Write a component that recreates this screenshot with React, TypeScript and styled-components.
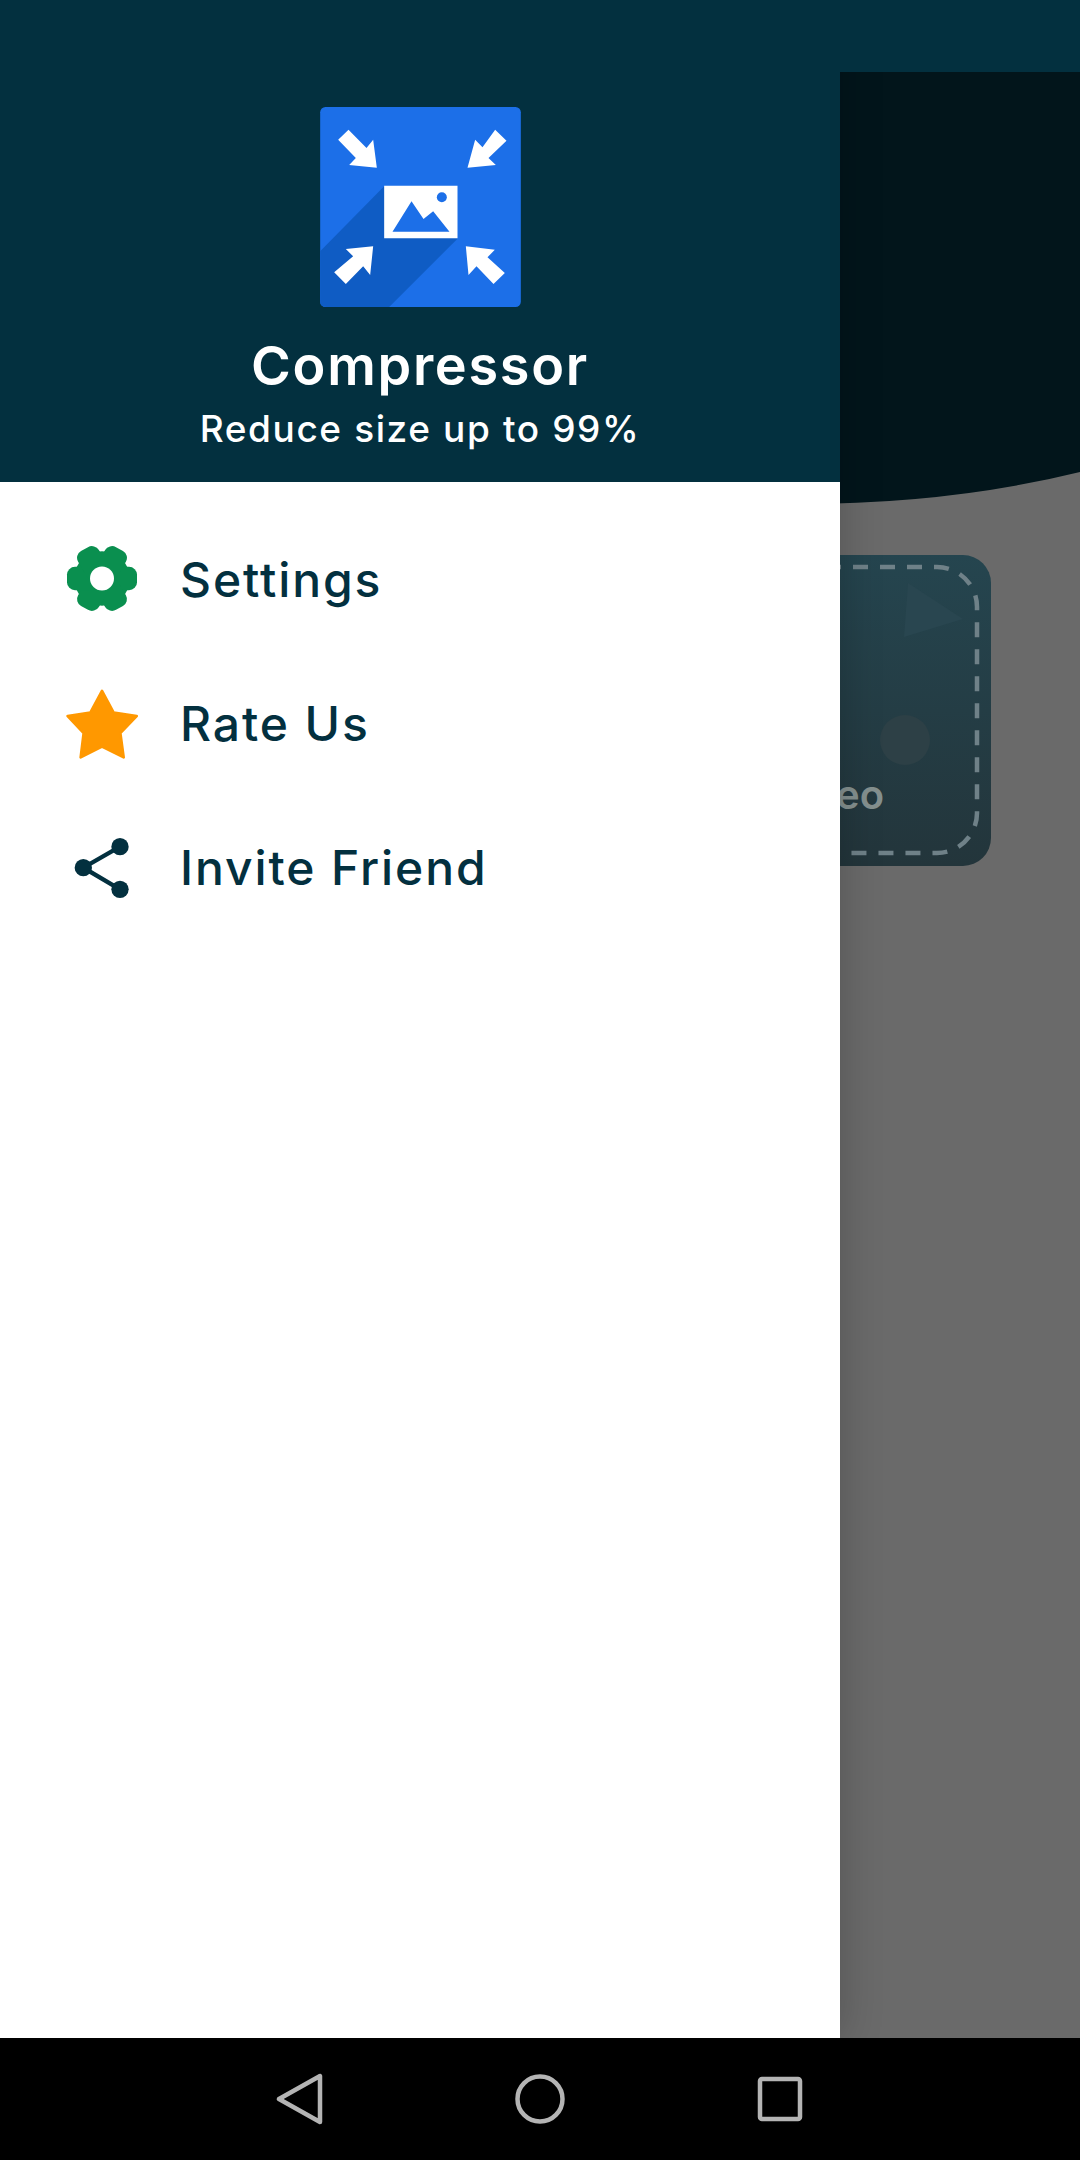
import styled, { createGlobalStyle } from 'styled-components';

const GlobalStyle = createGlobalStyle`
  html, body {
    margin: 0;
    padding: 0;
    background: #000;
  }
`;

const Screen = styled.div`
  width: 1080px;
  height: 2160px;
  display: flex;
  flex-direction: column;
  font-family: Inter, "Liberation Sans", sans-serif;
  overflow: hidden;
`;

const Stage = styled.div`
  position: relative;
  flex: 1;
  background: #6a6a6a;
  overflow: hidden;
`;

const StatusStrip = styled.div`
  position: relative;
  z-index: 1;
  height: 72px;
  background: #03303f;
`;

const Hero = styled.div`
  height: 398px;
  background: #02151b;
`;

const HeroCurve = styled.svg`
  display: block;
  width: 1080px;
  height: 34px;
`;

const Card = styled.div`
  position: relative;
  box-sizing: border-box;
  width: 391px;
  height: 311px;
  margin: 51px 0 0 600px;
  border-radius: 28px;
  background: linear-gradient(180deg, #25454f 0%, #23353b 100%);
  display: flex;
  flex-direction: column;
  align-items: flex-end;
  justify-content: flex-end;
  padding: 0 107px 48px 0;
`;

const CardArt = styled.svg`
  position: absolute;
  left: 0;
  top: 0;
`;

const CardLabel = styled.span`
  position: relative;
  font-size: 40px;
  line-height: 46px;
  font-weight: 600;
  color: #84908f;
`;

const Drawer = styled.aside`
  position: absolute;
  left: 0;
  top: 0;
  bottom: 0;
  width: 840px;
  background: #fff;
  box-shadow: 0 0 40px rgba(0, 0, 0, 0.22);
`;

const DrawerHeader = styled.header`
  box-sizing: border-box;
  height: 482px;
  padding-top: 107px;
  background: #03303f;
  color: #fff;
  display: flex;
  flex-direction: column;
  align-items: center;
`;

const Logo = styled.svg`
  display: block;
  width: 201px;
  height: 200px;
`;

const AppName = styled.h1`
  margin: 27px 0 0;
  font-size: 54px;
  line-height: 64px;
  font-weight: 600;
  letter-spacing: 1.7px;
`;

const Tagline = styled.p`
  margin: 8px 0 0;
  font-size: 37px;
  line-height: 46px;
  font-weight: 500;
  letter-spacing: 1.6px;
`;

const Menu = styled.nav`
  padding-top: 26px;
`;

const MenuRow = styled.div`
  height: 144px;
  display: flex;
  align-items: center;
  gap: 42px;
  padding-left: 66px;
`;

const MenuIcon = styled.svg`
  display: block;
  width: 72px;
  height: 72px;
  flex: none;
`;

const MenuLabel = styled.span`
  font-size: 48px;
  line-height: 56px;
  font-weight: 500;
  color: #03303f;
  letter-spacing: 1.9px;
`;

const NavBar = styled.div`
  height: 122px;
  flex: none;
  background: #000;
  display: flex;
  align-items: center;
  justify-content: center;
  gap: 190px;
`;

const NavIcon = styled.svg`
  display: block;
  width: 50px;
  height: 52px;
  fill: none;
  stroke: #b4b4b4;
  stroke-width: 4.5;
  stroke-linejoin: round;
`;

const Backdrop = () => (
  <>
    <StatusStrip />
    <Hero />
    <HeroCurve viewBox="0 0 1080 34">
      <path d="M0 0H1080V2Q950 34 800 34H0Z" fill="#02151b" />
    </HeroCurve>
    <Card>
      <CardArt width="391" height="311" viewBox="0 0 391 311">
        <rect x="-30" y="12" width="407" height="286" rx="40" fill="none" stroke="#6f8188" strokeWidth="4.5" strokeDasharray="15 12" />
        <path d="M308 28L363 64 304 82Z" fill="#294650" />
        <circle cx="305" cy="185" r="25" fill="#2d4046" />
      </CardArt>
      <CardLabel>Video</CardLabel>
    </Card>
  </>
);

const AppLogo = () => (
  <Logo viewBox="58 52 602 600">
    <rect x="58" y="52" width="602" height="600" rx="16" fill="#1c6fe8" />
    <path d="M250 290L58 485V634Q58 652 76 652H265L470 447Z" fill="#0f5cc4" />
    <path d="M250 288H470V446H250Z" fill="#fff" />
    <circle cx="423" cy="323" r="15" fill="#1c6fe8" />
    <path d="M275 426L332 335 368 388 397 365 446 426Z" fill="#1c6fe8" />
    <g fill="#fff">
      <path d="M228 234L145 226 165 205 112 150 143 120 197 175 217 150Z" />
      <path d="M500 234L523 150 545 173 583 120 617 153 563 205 585 226Z" />
      <path d="M217 470L135 478 157 500 100 548 135 583 187 530 208 556Z" />
      <path d="M495 470L582 480 560 503 612 550 578 583 527 530 503 556Z" />
    </g>
  </Logo>
);

const GearIcon = () => (
  <MenuIcon viewBox="-36 -34.5 72 72">
    <g fill="#0a8f4f" transform="scale(1 0.97)">
      <circle r="28" />
      {[0, 60, 120, 180, 240, 300].map(angle => (
        <rect key={angle} x="0" y="-12" width="35" height="24" rx="8" transform={`rotate(${angle})`} />
      ))}
    </g>
    <circle r="12" fill="#fff" />
  </MenuIcon>
);

const StarIcon = () => (
  <MenuIcon viewBox="77 500 216 216">
    <path
      d="M185 509L220 574 289 584 240 635 250 708 185 676 121 708 130 635 82 584 150 574Z"
      fill="#ff9800"
      stroke="#ff9800"
      strokeWidth="8"
      strokeLinejoin="round"
    />
  </MenuIcon>
);

const ShareIcon = () => (
  <MenuIcon viewBox="78 933 216 216">
    <path d="M240 977L130 1040 240 1105" fill="none" stroke="#03303f" strokeWidth="13" />
    <g fill="#03303f">
      <circle cx="240" cy="977" r="26" />
      <circle cx="130" cy="1040" r="26" />
      <circle cx="240" cy="1105" r="26" />
    </g>
  </MenuIcon>
);

const menuItems = [
  { label: 'Settings', icon: <GearIcon /> },
  { label: 'Rate Us', icon: <StarIcon /> },
  { label: 'Invite Friend', icon: <ShareIcon /> },
];

export default function App() {
  return (
    <Screen>
      <GlobalStyle />
      <Stage>
        <Backdrop />
        <Drawer>
          <DrawerHeader>
            <AppLogo />
            <AppName>Compressor</AppName>
            <Tagline>Reduce size up to 99%</Tagline>
          </DrawerHeader>
          <Menu>
            {menuItems.map(item => (
              <MenuRow key={item.label}>
                {item.icon}
                <MenuLabel>{item.label}</MenuLabel>
              </MenuRow>
            ))}
          </Menu>
        </Drawer>
      </Stage>
      <NavBar>
        <NavIcon viewBox="0 0 50 52">
          <path d="M45 3V49L4 26Z" />
        </NavIcon>
        <NavIcon viewBox="0 0 50 52">
          <ellipse cx="25" cy="26" rx="22.5" ry="22.5" />
        </NavIcon>
        <NavIcon viewBox="0 0 50 52">
          <rect x="5" y="6" width="40" height="40" rx="2" />
        </NavIcon>
      </NavBar>
    </Screen>
  );
}
